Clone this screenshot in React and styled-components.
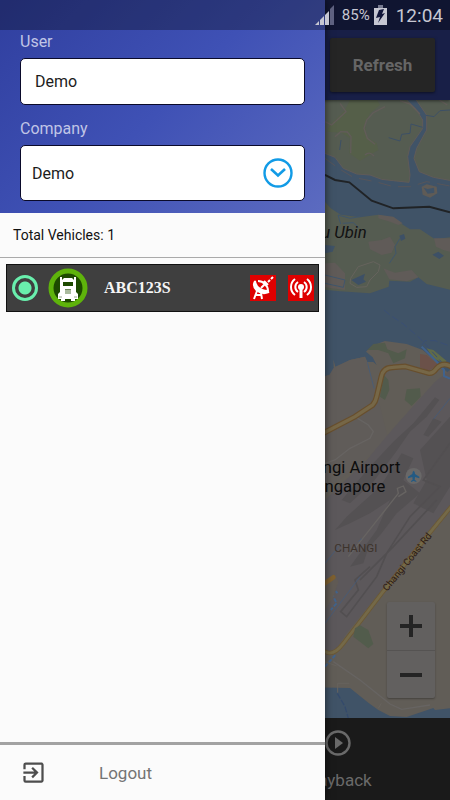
import React from "react";
import styled, { createGlobalStyle } from "styled-components";
import { MdExitToApp } from "react-icons/md";

const GlobalStyles = createGlobalStyle`
  * {
    box-sizing: border-box;
  }
  body {
    margin: 0;
    font-family: Roboto, "Liberation Sans", sans-serif;
  }
  button,
  input,
  select {
    font-family: inherit;
  }
`;

const PageStyles = styled.div`
  position: relative;
  min-height: 100vh;
  display: flex;
  flex-direction: column;
  overflow: hidden;
  background-color: #1a1a1a;
`;

const StatusBarStyles = styled.div`
  position: absolute;
  top: 0;
  left: 0;
  right: 0;
  z-index: 3;
  height: 30px;
  padding: 0 7px;
  display: flex;
  align-items: center;
  justify-content: flex-end;
  color: #c6c7d2;
  background-color: rgba(0, 0, 0, 0.3);
  .status {
    &-signal {
      margin-right: 7px;
    }
    &-percent {
      font-size: 15px;
      margin-right: 4px;
    }
    &-battery {
      margin-right: 9px;
    }
    &-time {
      font-size: 19px;
    }
  }
`;

const HeaderStyles = styled.header`
  display: flex;
  justify-content: flex-end;
  padding: 38px 15px 8px;
  background-color: #181f47;
  position: relative;
  z-index: 1;
  box-shadow: 0 1px 3px rgba(0, 0, 0, 0.5);
`;

const RefreshButton = styled.button`
  width: 105px;
  height: 54px;
  padding: 0;
  border: none;
  border-radius: 2px;
  font-size: 17px;
  font-weight: 700;
  color: #666666;
  background-color: #252525;
  box-shadow: 0 1px 3px rgba(0, 0, 0, 0.5);
`;

const MapStyles = styled.main`
  position: relative;
  flex: 1;
  display: flex;
  background-color: #405367;
  .map-canvas {
    display: block;
    width: 100%;
    flex: 1;
  }
`;

const ZoomControls = styled.div`
  position: absolute;
  right: 15px;
  bottom: 20px;
  display: flex;
  flex-direction: column;
  border-radius: 2px;
  background-color: #62605f;
  box-shadow: 0 1px 2px rgba(0, 0, 0, 0.3);
`;

const ZoomButton = styled.button`
  width: 48px;
  height: 48px;
  padding: 0;
  display: flex;
  align-items: center;
  justify-content: center;
  border: none;
  border-top: ${(props) => (props.$divided ? "1px solid #555352" : "none")};
  background: none;
`;

const TabBarStyles = styled.nav`
  display: grid;
  grid-template-columns: 1fr 1fr;
  height: 82px;
  background-color: #1a1a1a;
`;

const TabButton = styled.button`
  grid-column: 2;
  display: flex;
  flex-direction: column;
  align-items: center;
  gap: 12px;
  padding: 12px 0 0;
  border: none;
  background: none;
  font-size: 17px;
  line-height: 24px;
  color: #6a6a6a;
`;

const DrawerStyles = styled.aside`
  position: absolute;
  top: 0;
  bottom: 0;
  left: 0;
  z-index: 2;
  width: 325px;
  max-width: 85%;
  display: flex;
  flex-direction: column;
  background-color: #fbfbfb;
  box-shadow: 0 0 8px rgba(0, 0, 0, 0.6);
`;

const AccountForm = styled.form`
  padding: 30px 20px 12px;
  background-image: linear-gradient(135deg, #303f9f, #3f51b5 50%, #5c6bc0);
`;

const Field = styled.div`
  display: flex;
  flex-direction: column;
  gap: 4px;
  & + & {
    margin-top: 12px;
  }
  label {
    font-size: 16px;
    line-height: 24px;
    color: #c0c5e6;
  }
`;

const TextInput = styled.input`
  width: 100%;
  height: 47px;
  padding: 0 14px;
  border: 1px solid #0a0a2a;
  border-radius: 5px;
  font-size: 16px;
  color: #1c1c1c;
  background-color: #ffffff;
`;

const SelectBox = styled.div`
  display: grid;
  align-items: center;
  select,
  svg {
    grid-area: 1 / 1;
  }
  select {
    appearance: none;
    width: 100%;
    height: 56px;
    padding: 0 11px;
    border: 1px solid #0a0a2a;
    border-radius: 5px;
    font-size: 16px;
    color: #1c1c1c;
    background-color: #ffffff;
  }
  svg {
    justify-self: end;
    margin-right: 12px;
    pointer-events: none;
  }
`;

const TotalVehicles = styled.div`
  padding: 12px 13px;
  font-size: 14px;
  line-height: 20px;
  color: #111111;
  border-bottom: 1px solid #aaaaaa;
`;

const VehicleList = styled.ul`
  flex: 1;
  margin: 0;
  padding: 6px;
  list-style: none;
`;

const VehicleItem = styled.li`
  display: flex;
  align-items: center;
  height: 48px;
  padding: 0 4px 0 5px;
  border: 1px solid #111111;
  background-color: #3f3f3f;
  .vehicle {
    &-truck {
      margin-left: 10px;
    }
    &-plate {
      flex: 1;
      margin-left: 16px;
      font-family: "Liberation Serif", serif;
      font-size: 16px;
      font-weight: bold;
      color: #f5f5f5;
    }
    &-gps {
      margin-right: 12px;
    }
  }
`;

const VehicleRadio = styled.input`
  appearance: none;
  width: 26px;
  height: 26px;
  margin: 0;
  border: 3px solid #69efad;
  border-radius: 50%;
  background-image: radial-gradient(circle, #69efad 6px, transparent 7px);
`;

const LogoutButton = styled.button`
  display: flex;
  align-items: center;
  gap: 52px;
  height: 58px;
  padding: 0 20px;
  border: none;
  border-top: 3px solid #a2a2a2;
  background: none;
  font-size: 17px;
  color: #747474;
  svg {
    color: #4d4d4d;
  }
`;

const StatusBar = () => {
  return (
    <StatusBarStyles>
      <svg className="status-signal" width="20" height="20" viewBox="0 0 20 20">
        <path d="M0 20L4 16V20ZM5 15L9 11V20H5ZM10 10L14 6V20H10Z" fill="#c6c7d2" />
        <path d="M15 4L19 0V20H15Z" fill="#5e6180" />
      </svg>
      <span className="status-percent">85%</span>
      <svg className="status-battery" width="13" height="20" viewBox="0 0 13 20">
        <path d="M4 0h5v3H4z" fill="#777a90" />
        <path d="M0 3h13v17H0z" fill="#c6c7d2" />
        <path d="M5 5L10 4L8 9L11 8L4 18L6 12L2 13Z" fill="#12163a" />
      </svg>
      <span className="status-time">12:04</span>
    </StatusBarStyles>
  );
};

const MapCanvas = () => {
  return (
    <svg
      className="map-canvas"
      viewBox="-930 0 1350 1854"
      preserveAspectRatio="xMaxYMin slice"
      fill="none"
    >
      {/* northern shore and Pulau Ubin */}
      <g transform="translate(0 -30)">
        <path
          d="M0 0V185L45 190L75 202L100 235L140 252L180 255L215 268L250 272L297 277L300 255L293 200L300 170L338 115L338 90L318 58L290 30V0Z"
          fill="#555c51"
          stroke="#605b58"
          strokeWidth="3"
        />
        <path
          d="M312 20L350 75L350 120L320 175L312 205L328 245L370 262L430 273V20Z"
          fill="#555c51"
          stroke="#605b58"
          strokeWidth="3"
        />
        <path
          d="M125 20L105 60L60 105L50 125L95 128L120 145L118 190L150 212L205 180L200 160L170 140L165 100L180 70L210 45L195 20Z"
          fill="#555f49"
        />
        <path
          d="M90 40L108 65L65 105L45 95M225 50L190 68L170 90L162 115L172 145L195 163M75 140L92 125L112 126L123 140L122 190M165 195Q178 182 192 198M270 32L300 42L330 72M388 30L412 45"
          stroke="#625c59"
          strokeWidth="4"
        />
        <path
          d="M348 76L372 80L390 62L420 60M338 112L303 102L300 130L275 133L270 153L236 143M93 150L89 180"
          stroke="#3d5066"
          strokeWidth="3"
        />
        <path
          d="M45 205L90 238L130 262L200 276L250 290L300 290L350 275L420 288"
          stroke="#625653"
          strokeWidth="2"
          strokeDasharray="38 22"
        />
        <path d="M335 290L350 283L380 290L382 310L360 323L338 314Z" fill="#5f5b56" />
        <path d="M341 293L353 297L372 293L373 308L353 311Z" fill="#405367" />
        <path
          d="M0 240L48 256L75 270L118 277L185 332L250 355L358 350L420 367"
          stroke="#202326"
          strokeWidth="6"
        />
        <path
          d="M0 330L45 335L62 355L92 374L150 382L205 374L250 384L280 405L300 418L330 418L375 448L430 440V602L390 592L350 582L325 562L300 575L238 572L236 590L180 610L90 604L0 595Z"
          fill="#555c51"
        />
        <path
          d="M205 374L250 380L278 400L265 405L240 395L205 385ZM175 455L215 450L240 440L255 465L245 488L215 495L180 478ZM220 535L255 548L305 540L325 562L290 574L238 568ZM372 445H420V485L400 480L378 470ZM45 520L75 518L105 550V600L45 592Z"
          fill="#605b58"
        />
        <path
          d="M268 437L282 432L286 446L273 453ZM367 494L385 485L402 497L388 507ZM124 570L165 551L160 568L168 575L145 585Z"
          fill="#3d5066"
        />
        <path
          d="M92 402L84 375L120 385L150 380M98 400L130 398L145 412M270 445L255 470L258 490L238 520M45 555L105 570L100 592L45 580"
          stroke="#40566c"
          strokeWidth="3"
        />
        <path
          d="M122 565L145 530L190 515L210 525L205 545L180 570L170 590L140 592L120 580Z"
          stroke="#66635d"
          strokeWidth="3"
        />
        <path d="M45 465L75 468L68 485L45 490Z" fill="#405367" />
      </g>

      {/* Changi mainland */}
      <g transform="translate(0 600)">
        <path
          d="M0 240L58 225L72 218L70 178L76 200L120 180L165 170L172 186L190 186L200 195L188 172L168 155L185 138L225 123L290 132L338 150L380 185L430 235V1224L375 1230L370 1224L290 1251L240 1248L205 1230L175 1208L120 1164L0 1162Z"
          fill="#615d57"
        />
        <path
          d="M0 240L58 225L70 205L120 180L165 170L172 186L192 245L235 420L100 530L0 600Z"
          fill="#605c59"
        />
        <path
          d="M172 150L190 132L225 128L232 148L265 160L290 148L285 175L250 190L235 160L205 150ZM222 225L235 240L238 270L225 300L210 290ZM290 268L330 265L332 290L305 318L284 300Z"
          fill="#525b4c"
        />
        <path d="M330 162L350 165L385 195L355 212L330 202Z" fill="#6b5149" />
        <path d="M350 145L370 150L410 183L400 190L370 175Z" fill="#606b49" />
        <path
          d="M420 210L375 245L250 385L170 480L45 600V1060L70 1060L110 1000L215 870L355 700L420 625Z"
          fill="#5c585b"
        />
        <path
          d="M375 292L388 300L350 350L300 395L255 460L190 545L120 610L95 600L180 500L250 425L310 370ZM370 355L395 365L355 410L340 405ZM275 460L310 475L280 540L330 580L260 640L215 700L175 745L160 790L120 800L200 690L240 600L180 640L120 670L75 690L110 650L210 560ZM330 450L420 350V560L370 640L310 610L350 540Z"
          fill="#545153"
        />
        <path
          d="M420 430L340 540L390 560L300 650L230 760L200 830L110 950L92 935L145 870L135 840L180 800M150 840L250 740L380 600"
          stroke="#524f51"
          strokeWidth="5"
        />
        <path
          d="M138 352L175 375L190 395L180 415L120 445L75 480L45 490M115 770L265 580L262 565L280 558L288 575L265 590M70 1085L150 1140L240 1212L275 1228L360 1215"
          stroke="#676462"
          strokeWidth="4"
        />
        <path
          d="M420 295L370 358M172 187L192 265M45 790L90 735M45 970L150 830M145 725L155 716"
          stroke="#415c80"
          strokeWidth="2"
        />
        <path
          d="M45 1100L78 1063M55 868L68 858L82 880M65 880L80 910L62 930"
          stroke="#42638a"
          strokeWidth="6"
          strokeDasharray="12 5"
        />
        <path d="M45 840L75 825L85 845L70 890L45 930Z" fill="#615b55" />
        <path
          d="M222 30L240 45L280 72L330 115L400 192M335 135L345 122L375 122L420 138"
          stroke="#3a4f75"
          strokeWidth="3"
          strokeDasharray="22 10"
        />
        <path d="M335 140L380 185L402 210V228L420 236" stroke="#40628d" strokeWidth="6" />
        <path
          d="M0 422L45 397L135 350L188 315Q197 305 200 290L214 230Q220 202 248 202L285 199L355 219Q368 222 380 205Q400 182 430 204"
          stroke="#684f2d"
          strokeWidth="17"
        />
        <path
          d="M0 422L45 397L135 350L188 315Q197 305 200 290L214 230Q220 202 248 202L285 199L355 219Q368 222 380 205Q400 182 430 204"
          stroke="#766747"
          strokeWidth="10"
        />
        <path
          d="M0 1050L45 1055Q70 1070 100 1030L215 880L355 704L430 612"
          stroke="#6b5835"
          strokeWidth="13"
        />
        <path
          d="M0 1050L45 1055Q70 1070 100 1030L215 880L355 704L430 612"
          stroke="#746948"
          strokeWidth="8"
        />
        <path d="M30 860L70 832" stroke="#7e6030" strokeWidth="14" strokeLinecap="round" />
        <path d="M135 985L150 976L175 990L190 1032L175 1045L130 1010Z" fill="#525c4c" />
        <path
          d="M83 1178V1150H118M205 1225L214 1210M45 1085L80 1098"
          stroke="#67635e"
          strokeWidth="3"
        />
        <path d="M82 1180L105 1220L115 1255" stroke="#344a6c" strokeWidth="4" strokeDasharray="18 5" />
        <circle cx="311" cy="528" r="24" fill="#696868" />
        <path
          d="M311 512Q315 515 315 522L328 530V535L315 531L314 539L319 543V546L311 543L303 546V543L308 539L307 531L294 535V530L307 522Q307 515 311 512Z"
          fill="#245a83"
        />
      </g>

      <g fontFamily="Roboto, sans-serif">
        <text x="170" y="415" fontSize="50" fontStyle="italic" textAnchor="end" fill="#111111">
          Pulau Ubin
        </text>
        <text x="271" y="1119" fontSize="50" textAnchor="end" fill="#0c0c0c">
          Changi Airport
        </text>
        <text x="226" y="1175" fontSize="50" textAnchor="end" fill="#0c0c0c">
          Singapore
        </text>
        <text x="73" y="1356" fontSize="35" fill="#3c332c">
          CHANGI
        </text>
        <text
          x="232"
          y="1475"
          fontSize="29"
          fill="#2c1a15"
          transform="rotate(-51 232 1475)"
        >
          Changi Coast Rd
        </text>
      </g>
    </svg>
  );
};

const TruckIcon = () => {
  return (
    <svg className="vehicle-truck" width="40" height="40" viewBox="0 0 40 40">
      <circle cx="20" cy="20" r="17" fill="#1d4a00" stroke="#5eb30b" strokeWidth="5" />
      <path
        d="M12 9h2v3l2-2h8l2 2V9h2v15l2 2v5h-3v2h-4v-2h-6v2h-4v-2h-3v-5l2-2z"
        fill="#ffffff"
      />
      <path d="M15 14h10v4H15z" fill="#1d4a00" />
      <path d="M17 21h6v5h-6z" fill="#6f8a5c" />
      <path d="M17 23h6M17 25h6" stroke="#e6ebe0" strokeWidth="1" />
      <path d="M11 29h3M26 29h3" stroke="#9aa892" strokeWidth="1" />
    </svg>
  );
};

const SatelliteIcon = () => {
  return (
    <svg className="vehicle-gps" width="26" height="26" viewBox="0 0 26 26">
      <path d="M0 0h26v26H0z" fill="#df0000" />
      <path
        d="M4 6Q1 11 6 16Q12 21 19 18Q20 17 18 15Q12 15 8 11Q6 8 6 6Q5 5 4 6Z"
        fill="#ffffff"
      />
      <path d="M7 16L4 24M11 18L12 24M5 20H11" stroke="#ffffff" strokeWidth="2" />
      <path
        d="M8 6Q12 6 15 9Q18 12 18 16M11 13L16 8M14 6L18 10"
        stroke="#ffffff"
        strokeWidth="2"
        fill="none"
      />
      <path d="M18 7L20 5M21 4L23 2" stroke="#ffffff" strokeWidth="2" />
    </svg>
  );
};

const SignalIcon = () => {
  return (
    <svg width="26" height="26" viewBox="0 0 26 26" fill="none">
      <path d="M0 0h26v26H0z" fill="#df0000" />
      <circle cx="13" cy="12" r="3" fill="#ffffff" />
      <path d="M13 12V23" stroke="#ffffff" strokeWidth="3" />
      <path
        d="M10 17A6 6 0 0 1 10 7M16 17A6 6 0 0 0 16 7M7 20A10 10 0 0 1 7 4M19 20A10 10 0 0 0 19 4"
        stroke="#ffffff"
        strokeWidth="2"
      />
    </svg>
  );
};

const Drawer = () => {
  return (
    <DrawerStyles>
      <AccountForm>
        <Field>
          <label htmlFor="user">User</label>
          <TextInput id="user" type="text" defaultValue="Demo" />
        </Field>
        <Field>
          <label htmlFor="company">Company</label>
          <SelectBox>
            <select id="company" defaultValue="demo">
              <option value="demo">Demo</option>
            </select>
            <svg width="30" height="30" viewBox="0 0 30 30" fill="none" stroke="#129be6">
              <circle cx="15" cy="15" r="13.5" strokeWidth="2.4" />
              <path d="M8 11L15 17.5L22 11" strokeWidth="2.6" />
            </svg>
          </SelectBox>
        </Field>
      </AccountForm>
      <TotalVehicles>Total Vehicles: 1</TotalVehicles>
      <VehicleList>
        <VehicleItem>
          <VehicleRadio
            type="radio"
            name="vehicle"
            id="vehicle-1"
            defaultChecked
          />
          <TruckIcon />
          <label className="vehicle-plate" htmlFor="vehicle-1">
            ABC123S
          </label>
          <SatelliteIcon />
          <SignalIcon />
        </VehicleItem>
      </VehicleList>
      <LogoutButton type="button">
        <MdExitToApp size={27} />
        Logout
      </LogoutButton>
    </DrawerStyles>
  );
};

const App = () => {
  return (
    <PageStyles>
      <GlobalStyles />
      <StatusBar />
      <HeaderStyles>
        <RefreshButton type="button">Refresh</RefreshButton>
      </HeaderStyles>
      <MapStyles>
        <MapCanvas />
        <ZoomControls>
          <ZoomButton type="button" aria-label="Zoom in">
            <svg width="22" height="22" viewBox="0 0 22 22">
              <path d="M11 0V22M0 11H22" stroke="#242424" strokeWidth="4" />
            </svg>
          </ZoomButton>
          <ZoomButton type="button" aria-label="Zoom out" $divided>
            <svg width="22" height="22" viewBox="0 0 22 22">
              <path d="M0 11H22" stroke="#242424" strokeWidth="4" />
            </svg>
          </ZoomButton>
        </ZoomControls>
      </MapStyles>
      <TabBarStyles>
        <TabButton type="button">
          <svg width="26" height="26" viewBox="0 0 26 26">
            <circle cx="13" cy="13" r="11.5" fill="none" stroke="#6a6a6a" strokeWidth="2.4" />
            <path d="M10 7L18 13L10 19Z" fill="#6a6a6a" />
          </svg>
          Playback
        </TabButton>
      </TabBarStyles>
      <Drawer />
    </PageStyles>
  );
};

export default App;
